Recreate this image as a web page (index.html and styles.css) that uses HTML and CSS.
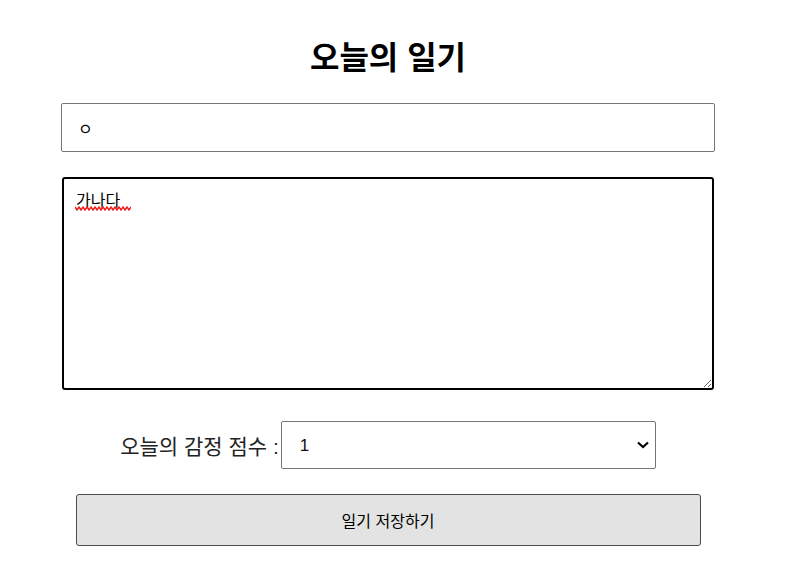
FILE: index.html
```html
<!DOCTYPE html>
<html lang="ko">
<head>
<meta charset="utf-8">
<title>오늘의 일기</title>
<link rel="stylesheet" href="styles.css">
</head>
<body>
<div class="page">
  <h1 class="title">오늘의 일기</h1>
  <input class="author" type="text" value="ㅇ">
  <div class="content-wrap">
    <textarea class="content" spellcheck="false">가나다</textarea>
    <svg class="squiggle" width="56" height="5" viewBox="0 0 56 5" aria-hidden="true">
      <path d="M0 1 L2 4 L4 1 L6 4 L8 1 L10 4 L12 1 L14 4 L16 1 L18 4 L20 1 L22 4 L24 1 L26 4 L28 1 L30 4 L32 1 L34 4 L36 1 L38 4 L40 1 L42 4 L44 1 L46 4 L48 1 L50 4 L52 1 L54 4 L56 1" fill="none" stroke="#ee1c1c" stroke-width="1.4"/>
    </svg>
  </div>
  <div class="emotion">
    <span class="emotion-label">오늘의 감정 점수 :</span>
    <div class="select-wrap">
      <select class="emotion-select">
        <option>1</option>
        <option>2</option>
        <option>3</option>
        <option>4</option>
        <option>5</option>
      </select>
      <svg class="chevron" width="12" height="8" viewBox="0 0 12 8" aria-hidden="true">
        <path d="M1 1.5 L6 6 L11 1.5" fill="none" stroke="#000" stroke-width="2.2"/>
      </svg>
    </div>
  </div>
  <button class="save" type="button">일기 저장하기</button>
</div>
</body>
</html>
```

FILE: styles.css
```css
html, body {
  margin: 0;
  padding: 0;
  background: #fff;
}

body {
  font-family: "Liberation Sans", "Noto Sans CJK KR", sans-serif;
  color: #000;
}

.page {
  width: 776px;
  display: flex;
  flex-direction: column;
  align-items: center;
  padding-top: 36px;
}

.title {
  margin: 0;
  font-size: 32px;
  font-weight: 700;
  line-height: 44px;
}

.author {
  box-sizing: border-box;
  width: 654px;
  height: 49px;
  margin-top: 23px;
  padding: 0 16px;
  border: 1px solid #767676;
  border-radius: 2px;
  font-family: inherit;
  font-size: 16px;
  color: #000;
  outline: none;
}

.content-wrap {
  position: relative;
  margin-top: 25px;
}

.content {
  display: block;
  box-sizing: border-box;
  width: 652px;
  height: 213px;
  padding: 12px 12px;
  border: 2px solid #000;
  border-radius: 3px;
  font-family: inherit;
  font-size: 16px;
  line-height: 20px;
  color: #000;
  outline: none;
}

.squiggle {
  position: absolute;
  left: 13px;
  top: 29px;
}

.emotion {
  display: flex;
  align-items: center;
  margin-top: 31px;
}

.emotion-label {
  font-size: 21px;
  color: #222;
  margin-right: 2px;
}

.select-wrap {
  position: relative;
}

.emotion-select {
  display: block;
  box-sizing: border-box;
  width: 375px;
  height: 48px;
  padding: 0 18px;
  border: 1px solid #767676;
  border-radius: 2px;
  background: #fff;
  font-family: inherit;
  font-size: 17px;
  color: #111;
  appearance: none;
  -webkit-appearance: none;
}

.chevron {
  position: absolute;
  right: 7px;
  top: 20px;
  pointer-events: none;
}

.save {
  box-sizing: border-box;
  width: 625px;
  height: 52px;
  margin-top: 25px;
  border: 1px solid #4b4b4b;
  border-radius: 3px;
  background: #e3e3e3;
  font-family: inherit;
  font-size: 16px;
  color: #000;
}
```
